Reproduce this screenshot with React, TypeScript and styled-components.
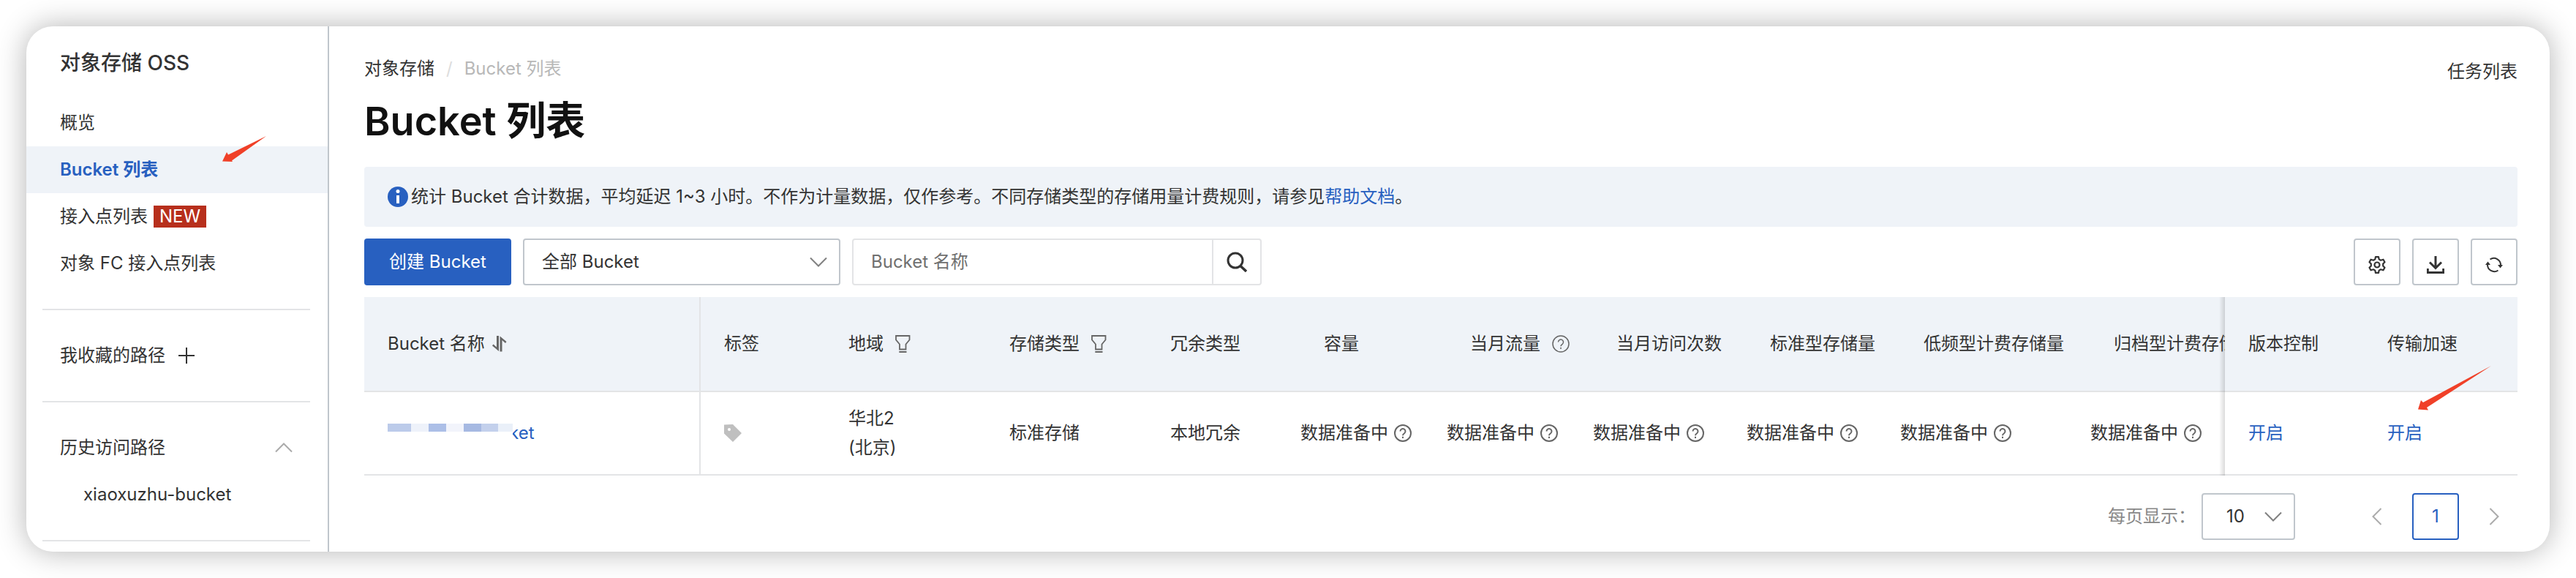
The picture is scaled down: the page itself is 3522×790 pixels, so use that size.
import React from 'react';
import styled, { createGlobalStyle, css } from 'styled-components';

const ink = '#333333';
const blue = '#2860c0';
const surface = '#eff3f8';
const line = '#e3e4e6';
const control = '#c0c6cc';

const GlobalStyle = createGlobalStyle`
  *, *::before, *::after { box-sizing: border-box; }
  body {
    margin: 0;
    background: #ffffff;
    color: ${ink};
    font: 24px/40px Inter, "Noto Sans CJK SC", sans-serif;
  }
  button, input, select { font: inherit; color: inherit; }
  a { color: ${blue}; text-decoration: none; }
  svg { display: block; flex: none; }
`;

const Page = styled.div`
  padding: 36px;
`;

const Card = styled.div`
  position: relative;
  display: flex;
  border-radius: 36px;
  background: #ffffff;
  box-shadow: 0 0 40px rgba(0, 0, 0, 0.3);
`;

const Sidebar = styled.aside`
  flex: none;
  width: 414px;
  padding-top: 16px;
  border-right: 2px solid ${control};
`;

const Product = styled.h2`
  margin: 0 0 16px;
  padding: 14px 46px;
  font-size: 28px;
  line-height: 40px;
  font-weight: 500;
`;

const NavList = styled.ul`
  margin: 0;
  padding: 0;
  list-style: none;
`;

const NavLink = styled.a<{ $active?: boolean; $nested?: boolean }>`
  display: flex;
  align-items: center;
  gap: 8px;
  height: 64px;
  padding-left: ${(p) => (p.$nested ? 78 : 46)}px;
  color: ${ink};
  ${(p) =>
    p.$active &&
    css`
      background: ${surface};
      color: ${blue};
      font-weight: 600;
    `}
`;

const NewTag = styled.span`
  padding: 0 8px;
  background: #b72f1c;
  color: #ffffff;
  line-height: 30px;
`;

const Divider = styled.hr`
  height: 2px;
  margin: 30px 24px 0 22px;
  border: 0;
  background: ${line};
`;

const GroupHead = styled.div`
  display: flex;
  align-items: center;
  gap: 18px;
  height: 64px;
  margin-top: 30px;
  padding: 0 48px 0 46px;
`;

const IconButton = styled.button<{ $push?: boolean }>`
  display: flex;
  padding: 0;
  border: 0;
  background: none;
  color: ${(p) => (p.$push ? '#aaaaaa' : ink)};
  margin-left: ${(p) => (p.$push ? 'auto' : '0')};
`;

const Main = styled.main`
  flex: 1;
  min-width: 0;
  padding: 38px 44px 16px 48px;
`;

const TopRow = styled.div`
  display: flex;
  justify-content: space-between;
  align-items: flex-start;
`;

const Crumbs = styled.nav`
  display: flex;
  gap: 16px;
  a { color: ${ink}; }
  span { color: #b8b8b8; }
  i { color: #dddddd; font-style: normal; }
`;

const TaskLink = styled.a`
  padding-top: 4px;
  color: ${ink};
`;

const Title = styled.h1`
  margin: 8px 0 22px;
  color: #111111;
  font-size: 54px;
  line-height: 80px;
  font-weight: 600;
`;

const Notice = styled.div`
  display: flex;
  align-items: center;
  gap: 4px;
  height: 82px;
  margin-bottom: 16px;
  padding: 0 32px;
  border-radius: 4px;
  background: ${surface};
`;

const Toolbar = styled.div`
  display: flex;
  gap: 16px;
  margin-bottom: 16px;
`;

const Spacer = styled.div`
  flex: 1;
`;

const CreateButton = styled.button`
  width: 201px;
  height: 64px;
  padding: 0;
  border: 0;
  border-radius: 4px;
  background: ${blue};
  color: #ffffff;
`;

const SelectBox = styled.label<{ $width: number }>`
  display: grid;
  align-items: center;
  width: ${(p) => p.$width}px;
  height: 64px;
  border: 2px solid ${control};
  border-radius: 4px;
  background: #ffffff;
  > * { grid-area: 1 / 1; }
  svg { justify-self: end; margin-right: 16px; color: #808080; pointer-events: none; }
`;

const Select = styled.select<{ $indent: number }>`
  width: 100%;
  height: 60px;
  padding: 0 0 0 ${(p) => p.$indent}px;
  border: 0;
  background: none;
  appearance: none;
`;

const SearchBox = styled.form`
  display: flex;
  width: 560px;
  height: 64px;
  border: 2px solid ${line};
  border-radius: 4px;
`;

const SearchInput = styled.input`
  flex: 1;
  min-width: 0;
  padding: 0 24px;
  border: 0;
  background: none;
  &::placeholder { color: #707070; opacity: 1; }
`;

const SearchButton = styled.button`
  display: flex;
  align-items: center;
  justify-content: center;
  width: 66px;
  padding: 0;
  border: 0;
  border-left: 2px solid ${line};
  background: none;
`;

const ToolButton = styled.button`
  display: flex;
  align-items: center;
  justify-content: center;
  width: 64px;
  height: 64px;
  padding: 8px 0 0;
  border: 2px solid ${control};
  border-radius: 4px;
  background: #ffffff;
`;

const TableScroll = styled.div`
  overflow-x: auto;
  scrollbar-width: none;
`;

const Table = styled.table`
  width: 100%;
  min-width: 2988px;
  table-layout: fixed;
  border-collapse: separate;
  border-spacing: 0;
  white-space: nowrap;
`;

const cell = css<{ $ruled?: boolean; $pin?: number }>`
  border-bottom: 2px solid ${line};
  text-align: left;
  font-weight: 400;
  ${(p) => p.$ruled && css`border-right: 2px solid ${line};`}
  ${(p) =>
    p.$pin !== undefined &&
    css`
      position: sticky;
      right: ${p.$pin}px;
      z-index: 1;
    `}
  ${(p) =>
    !!p.$pin &&
    css`
      &::before {
        content: '';
        position: absolute;
        top: 0;
        bottom: -2px;
        left: -8px;
        width: 8px;
        background: linear-gradient(to left, rgba(0, 0, 0, 0.14), rgba(0, 0, 0, 0));
      }
    `}
`;

const Th = styled.th<{ $ruled?: boolean; $pin?: number; $metric?: boolean }>`
  ${cell}
  height: 130px;
  padding: 0 0 0 ${(p) => (p.$metric ? 64 : 32)}px;
  background: ${surface};
`;

const Td = styled.td<{ $ruled?: boolean; $pin?: number }>`
  ${cell}
  height: 114px;
  padding: 0 0 0 32px;
  background: #ffffff;
`;

const Inline = styled.span<{ $gap: number }>`
  display: flex;
  align-items: center;
  gap: ${(p) => p.$gap}px;
  color: ${ink};
  svg { color: #666666; }
`;

const MaskedName = styled.a`
  display: flex;
  align-items: center;
  svg {
    position: relative;
    z-index: 1;
    margin-right: -5px;
    background: #ffffff;
  }
`;

const Pager = styled.div`
  display: flex;
  align-items: center;
  justify-content: flex-end;
  gap: 16px;
  margin-top: 24px;
`;

const PageSize = styled.div`
  display: flex;
  align-items: center;
  gap: 8px;
  margin-right: 64px;
`;

const PagerLabel = styled.span`
  color: #888888;
`;

const PageButton = styled.button<{ $current?: boolean }>`
  display: flex;
  align-items: center;
  justify-content: center;
  width: 64px;
  height: 64px;
  padding: 0;
  border: 2px solid ${(p) => (p.$current ? blue : 'transparent')};
  border-radius: 4px;
  background: none;
  color: ${(p) => (p.$current ? blue : '#aaaaaa')};
`;

const Pointer = styled.svg<{ $x: string; $y: number }>`
  position: absolute;
  top: ${(p) => p.$y}px;
  ${(p) => p.$x};
  z-index: 2;
  pointer-events: none;
`;

const Chevron = ({ turn = 0 }: { turn?: number }) => (
  <svg width="24" height="24" viewBox="0 0 24 24" fill="none" stroke="currentColor" strokeWidth="2">
    <path d="M1 6.5 12 17.5 23 6.5" transform={`rotate(${turn} 12 12)`} />
  </svg>
);

const Help = ({ weight = 2 }: { weight?: number }) => (
  <svg width="24" height="24" viewBox="0 0 24 24" fill="none" stroke="currentColor" strokeWidth={weight}>
    <circle cx="12" cy="12" r="11" />
    <path d="M8.5 9.5a3.5 3.5 0 1 1 5.6 2.8C12.7 13.3 12 13.8 12 15.2" />
    <path d="M12 16.8v2.2" />
  </svg>
);

const Funnel = () => (
  <svg width="21" height="24" viewBox="0 0 21 24" fill="none" stroke="currentColor" strokeWidth="2">
    <path d="M1 1H19.500V6.500L14.500 12.500V19.500H6V12.500L1 6.500Z" strokeWidth="1.800" />
    <path d="M5.300 23H15.500" />
  </svg>
);

const Sort = () => (
  <svg width="20" height="22" viewBox="0 0 20 22" fill="currentColor">
    <path d="M6 0H9V21L0 13.500 1.500 11.500 6 15.500Z" />
    <path d="M10.500 .5 19.500 8 18 10 13.500 6V21.500H10.500Z" />
  </svg>
);

const TagIcon = () => (
  <svg width="24" height="24" viewBox="0 0 24 24">
    <path fill="#bfbfbf" fillRule="evenodd" d="M0 .5 12 0 24 12 12 24 0 12.500ZM7 5a2 2 0 1 0 0 4 2 2 0 0 0 0-4Z" />
  </svg>
);

const InfoIcon = () => (
  <svg width="28" height="28" viewBox="0 0 28 28">
    <circle cx="14" cy="14" r="14" fill={blue} />
    <circle cx="14" cy="6.500" r="2.500" fill="#fff" />
    <path d="M12 12h4v11h-4z" fill="#fff" />
  </svg>
);

const PlusIcon = () => (
  <svg width="22" height="22" viewBox="0 0 22 22" stroke="currentColor" strokeWidth="2">
    <path d="M11 0V22M0 11H22" />
  </svg>
);

const SearchIcon = () => (
  <svg width="28" height="28" viewBox="0 0 28 28" fill="none" stroke={ink} strokeWidth="3">
    <circle cx="12" cy="12" r="10" />
    <path d="M19 19.500 27 27" strokeWidth="3.500" />
  </svg>
);

const GearIcon = () => (
  <svg width="24" height="24" viewBox="0 0 24 24" fill="none" stroke={ink} strokeWidth="2.200" strokeLinejoin="round">
    <path d="M10 1.100h4l.7 3.300 2.300 1.300 3.500-1 2 3.500-2.300 2.400v2.800l2.300 2.400-2 3.500-3.500-1-2.300 1.300-.7 3.300h-4l-.7-3.300L7 18.300l-3.500 1-2-3.500 2.300-2.400v-2.800L1.500 8.200l2-3.500 3.500 1 2.300-1.300Z" />
    <circle cx="12" cy="12" r="3.500" />
  </svg>
);

const DownloadIcon = () => (
  <svg width="24" height="24" viewBox="0 0 24 24" fill="none" stroke={ink} strokeWidth="3">
    <path d="M12 0V16M4 8.500 12 16.500 20 8.500" />
    <path d="M1.300 17V22.500H22.700V17" />
  </svg>
);

const RefreshIcon = () => (
  <svg width="24" height="24" viewBox="0 0 24 24" fill="none" stroke={ink} strokeWidth="2">
    <path d="M6.500 4.500A9.300 9.300 0 0 1 21 12.500" />
    <path d="M17.500 19.500A9.300 9.300 0 0 1 3 11.500" />
    <path d="M17 12h7l-3.500 4.500ZM0 12h7L3.500 7.500Z" fill={ink} stroke="none" />
  </svg>
);

const Mosaic = () => (
  <svg width="171" height="40" viewBox="0 0 171 40">
    <path fill="#bccbea" d="M0 7h32v11H0z" />
    <path fill="#eef2fa" d="M32 7h24v11H32z" />
    <path fill="#acbfe7" d="M56 7h24v11H56z" />
    <path fill="#f2f4fb" d="M80 7h24v11H80z" />
    <path fill="#a6b9e2" d="M104 7h24v11h-24z" />
    <path fill="#c3d0ec" d="M128 7h23v11h-23z" />
    <path fill="#eaf0f9" d="M151 7h20v11h-20z" />
  </svg>
);

const metrics = [
  { name: '容量' },
  { name: '当月流量', help: true },
  { name: '当月访问次数' },
  { name: '标准型存储量' },
  { name: '低频型计费存储量' },
  { name: '归档型计费存储量' },
];

const widths = [460, 170, 220, 220, 178, 200, 200, 210, 210, 260, undefined, 190, 210];

export default function App() {
  return (
    <>
      <GlobalStyle />
      <Page>
        <Card>
          <Sidebar>
            <Product>对象存储 OSS</Product>
            <NavList>
              <li><NavLink href="#overview">概览</NavLink></li>
              <li><NavLink href="#buckets" $active>Bucket 列表</NavLink></li>
              <li><NavLink href="#access">接入点列表<NewTag>NEW</NewTag></NavLink></li>
              <li><NavLink href="#fc">对象 FC 接入点列表</NavLink></li>
            </NavList>
            <Divider />
            <GroupHead>
              我收藏的路径
              <IconButton type="button" aria-label="添加"><PlusIcon /></IconButton>
            </GroupHead>
            <Divider />
            <GroupHead>
              历史访问路径
              <IconButton type="button" aria-label="收起" $push><Chevron turn={180} /></IconButton>
            </GroupHead>
            <NavLink href="#xiaoxuzhu-bucket" $nested>xiaoxuzhu-bucket</NavLink>
            <Divider />
          </Sidebar>

          <Main>
            <TopRow>
              <Crumbs>
                <a href="#oss">对象存储</a>
                <i>/</i>
                <span>Bucket 列表</span>
              </Crumbs>
              <TaskLink href="#tasks">任务列表</TaskLink>
            </TopRow>
            <Title>Bucket 列表</Title>

            <Notice>
              <InfoIcon />
              <span>
                统计 Bucket 合计数据，平均延迟 1~3 小时。不作为计量数据，仅作参考。不同存储类型的存储用量计费规则，请参见<a href="#help">帮助文档</a>。
              </span>
            </Notice>

            <Toolbar>
              <CreateButton type="button">创建 Bucket</CreateButton>
              <SelectBox $width={434}>
                <Select $indent={24} aria-label="Bucket 范围">
                  <option>全部 Bucket</option>
                </Select>
                <Chevron />
              </SelectBox>
              <SearchBox>
                <SearchInput type="text" placeholder="Bucket 名称" aria-label="Bucket 名称" />
                <SearchButton type="button" aria-label="搜索"><SearchIcon /></SearchButton>
              </SearchBox>
              <Spacer />
              <ToolButton type="button" aria-label="设置"><GearIcon /></ToolButton>
              <ToolButton type="button" aria-label="下载"><DownloadIcon /></ToolButton>
              <ToolButton type="button" aria-label="刷新"><RefreshIcon /></ToolButton>
            </Toolbar>

            <TableScroll>
              <Table>
                <colgroup>
                  {widths.map((w, i) => <col key={i} width={w} />)}
                </colgroup>
                <thead>
                  <tr>
                    <Th $ruled><Inline $gap={10}>Bucket 名称<Sort /></Inline></Th>
                    <Th>标签</Th>
                    <Th><Inline $gap={16}>地域<Funnel /></Inline></Th>
                    <Th><Inline $gap={16}>存储类型<Funnel /></Inline></Th>
                    <Th>冗余类型</Th>
                    {metrics.map((m) => (
                      <Th key={m.name} $metric>
                        <Inline $gap={16}>{m.name}{m.help && <Help weight={1.5} />}</Inline>
                      </Th>
                    ))}
                    <Th $pin={210}>版本控制</Th>
                    <Th $pin={0}>传输加速</Th>
                  </tr>
                </thead>
                <tbody>
                  <tr>
                    <Td $ruled><MaskedName href="#bucket"><Mosaic />ket</MaskedName></Td>
                    <Td><TagIcon /></Td>
                    <Td>华北2<br />(北京)</Td>
                    <Td>标准存储</Td>
                    <Td>本地冗余</Td>
                    {metrics.map((m) => (
                      <Td key={m.name}><Inline $gap={8}>数据准备中<Help /></Inline></Td>
                    ))}
                    <Td $pin={210}><a href="#versioning">开启</a></Td>
                    <Td $pin={0}><a href="#acceleration">开启</a></Td>
                  </tr>
                </tbody>
              </Table>
            </TableScroll>

            <Pager>
              <PageSize>
                <PagerLabel id="size-label">每页显示：</PagerLabel>
                <SelectBox $width={128}>
                  <Select $indent={32} aria-labelledby="size-label">
                    <option>10</option>
                  </Select>
                  <Chevron />
                </SelectBox>
              </PageSize>
              <PageButton type="button" aria-label="上一页"><Chevron turn={90} /></PageButton>
              <PageButton type="button" $current>1</PageButton>
              <PageButton type="button" aria-label="下一页"><Chevron turn={-90} /></PageButton>
            </Pager>
          </Main>

          <Pointer $x="left: 268px" $y={150} width="60" height="36" viewBox="0 0 60 36" fill="#f04028">
            <path d="M60 0 13 33.500 14 35 0 34.500 6 22 8 25.500Z" />
          </Pointer>
          <Pointer $x="right: 80px" $y={464} width="100" height="62" viewBox="0 0 100 62" fill="#f04028">
            <path d="M100 0 12 57 14 60.500 0 59.500 4 47 7 50Z" />
          </Pointer>
        </Card>
      </Page>
    </>
  );
}
